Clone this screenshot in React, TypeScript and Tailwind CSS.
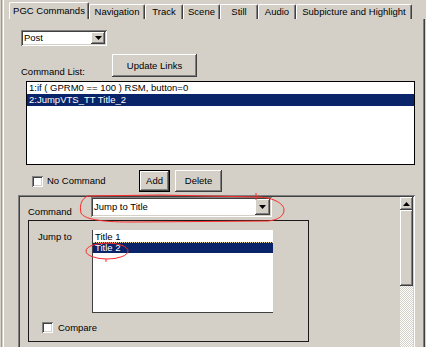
import React from "react";

const RAISED =
  "shadow-[inset_-1px_-1px_#404040,inset_1px_1px_#ffffff,inset_-2px_-2px_#808080,inset_2px_2px_#d4d0c8]";
const SUNKEN =
  "shadow-[inset_1px_1px_#808080,inset_-1px_-1px_#ffffff,inset_2px_2px_#404040,inset_-2px_-2px_#d4d0c8]";

function DownArrow() {
  return (
    <svg width="7" height="4" viewBox="0 0 7 4">
      <path d="M0 0H7L3.5 4Z" fill="#000" />
    </svg>
  );
}

function ArrowButton({ className }: { className: string }) {
  return (
    <div
      className={`${className} bg-[#d4d0c8] flex items-center justify-center shadow-[inset_-1px_-1px_#404040,inset_1px_1px_#ffffff,inset_-2px_-2px_#808080,inset_2px_2px_#d4d0c8]`}
    >
      <DownArrow />
    </div>
  );
}

const tabs = [
  { label: "PGC Commands", cls: "w-[80px] h-[17px]", sel: true },
  { label: "Navigation", cls: "w-[56px] h-[15px]", sel: false },
  { label: "Track", cls: "w-[38px] h-[15px]", sel: false },
  { label: "Scene", cls: "w-[37px] h-[15px]", sel: false },
  { label: "Still", cls: "w-[38px] h-[15px]", sel: false },
  { label: "Audio", cls: "w-[38px] h-[15px]", sel: false },
  { label: "Subpicture and Highlight", cls: "w-[116px] h-[15px]", sel: false },
];

function Checkbox({ className }: { className: string }) {
  return <div className={`${className} bg-white ${SUNKEN}`} />;
}

export default function App() {
  return (
    <div className="relative w-[426px] h-[347px] overflow-hidden bg-[#d4d0c8] text-black text-[9.5px] leading-none font-['Liberation_Sans',Arial,sans-serif] flex">
      {/* outer left edge */}
      <div className="ml-[1px] w-[1px] bg-[#9c9a94]" />
      {/* tab control */}
      <div className="ml-[1px] mr-[1px] flex-1 flex flex-col border-l border-l-white">
        {/* tab strip */}
        <div className="h-[19px] flex items-end pl-[5px] shrink-0">
          {tabs.map((t) => (
            <div
              key={t.label}
              className={`${t.cls} flex items-center justify-center border-l border-t border-r border-l-white border-t-white border-r-[#404040] rounded-t-[2px] shadow-[inset_-1px_0_#808080] whitespace-nowrap`}
            >
              <span className="pb-[1px]">{t.label}</span>
            </div>
          ))}
        </div>
        {/* tab page */}
        <div className="flex-1 flex flex-col border-r border-r-[#404040] shadow-[inset_-1px_0_#808080]">
          {/* Post combo */}
          <div
            className={`ml-[17px] mt-[11px] w-[86px] h-[16px] bg-white flex items-center justify-between pl-[3px] pr-[2px] ${SUNKEN}`}
          >
            <span>Post</span>
            <ArrowButton className="w-[14px] h-[12px]" />
          </div>

          {/* label + update links */}
          <div className="mt-[8px] flex h-[23px]">
            <div className="ml-[17px] w-[91px] self-end pb-[1px]">Command List:</div>
            <div className={`w-[85px] h-[23px] flex items-center justify-center bg-[#d4d0c8] ${RAISED}`}>
              Update Links
            </div>
          </div>

          {/* command list */}
          <div className="mt-[4px] ml-[22px] w-[389px] h-[84px] shrink-0 bg-white border border-black">
            <div className="h-[12px] flex items-center pl-[2px] whitespace-nowrap">
              1:if ( GPRM0 == 100 ) RSM, button=0
            </div>
            <div className="h-[12px] flex items-center pl-[2px] bg-[#0a246a] text-white whitespace-nowrap">
              2:JumpVTS_TT Title_2
            </div>
          </div>

          {/* no command / add / delete */}
          <div className="mt-[5px] flex h-[22px] items-center shrink-0">
            <div className="ml-[28px] w-[107px] flex items-center gap-[4px]">
              <Checkbox className="w-[11px] h-[11px]" />
              <span>No Command</span>
            </div>
            <div className="w-[31px] h-[22px] border border-black">
              <div className={`w-full h-full flex items-center justify-center bg-[#d4d0c8] ${RAISED}`}>
                Add
              </div>
            </div>
            <div
              className={`ml-[5px] w-[47px] h-[22px] flex items-center justify-center bg-[#d4d0c8] ${RAISED}`}
            >
              Delete
            </div>
          </div>

          {/* scrolling panel */}
          <div className={`mt-[3px] ml-[14px] w-[397px] h-[200px] shrink-0 p-[2px] flex ${SUNKEN}`}>
            <div className="flex-1 flex flex-col">
              <div className="flex h-[20px] shrink-0">
                <div className="ml-[8px] w-[63px] pt-[10px]">Command</div>
                <div
                  className={`w-[181px] h-[20px] bg-white flex items-center justify-between pl-[3px] pr-[2px] ${SUNKEN}`}
                >
                  <span>Jump to Title</span>
                  <ArrowButton className="w-[15px] h-[16px]" />
                </div>
              </div>

              <div className="mt-[3px] ml-[8px] w-[281px] h-[122px] shrink-0 border border-[#1a1a1a] flex flex-col">
                <div className="mt-[9px] flex">
                  <div className="w-[63px] pl-[9px] pt-[2px]">Jump to</div>
                  <div className="w-[181px] h-[83px] bg-white border-l border-b border-[#404040] pt-[1px]">
                    <div className="h-[11px] flex items-center pl-[2px]">Title 1</div>
                    <div className="h-[11px] flex items-center pl-[2px] bg-[#0a246a] text-white border-t border-dotted border-t-[#e6d88c]">
                      Title 2
                    </div>
                  </div>
                </div>
                <div className="mt-[9px] ml-[13px] flex items-center gap-[5px]">
                  <Checkbox className="w-[11px] h-[11px]" />
                  <span>Compare</span>
                </div>
              </div>
            </div>

            {/* scrollbar */}
            <div className="w-[13px] flex flex-col">
              <div className={`h-[13px] flex items-center justify-center bg-[#d4d0c8] ${RAISED}`}>
                <svg width="7" height="4" viewBox="0 0 7 4">
                  <path d="M3.5 0L7 4H0Z" fill="#000" />
                </svg>
              </div>
              <div className={`h-[76px] bg-[#d4d0c8] ${RAISED}`} />
              <div className="flex-1 [background-image:repeating-conic-gradient(#ffffff_0%_25%,#d4d0c8_0%_50%)] [background-size:2px_2px]" />
            </div>
          </div>
        </div>
      </div>

      {/* red hand-drawn annotations */}
      <svg
        className="absolute left-0 top-0 pointer-events-none"
        width="426"
        height="347"
        viewBox="0 0 426 347"
      >
        <path
          d="M88 196 L160 195 L256 197 C272 197 284 203 284 210 C284 216 278 220 268 221 L130 222 C100 222 84 219 81 213 C79 205 82 198 88 196 Z"
          fill="none"
          stroke="#ff2a2a"
          strokeWidth="1"
        />
        <path d="M256 193 L256 200" stroke="#ff2a2a" strokeWidth="1" />
        <ellipse cx="107" cy="251" rx="21" ry="8" fill="none" stroke="#ff2a2a" strokeWidth="1" />
        <path d="M106 259 L106 262" stroke="#ff2a2a" strokeWidth="1" />
      </svg>
    </div>
  );
}
